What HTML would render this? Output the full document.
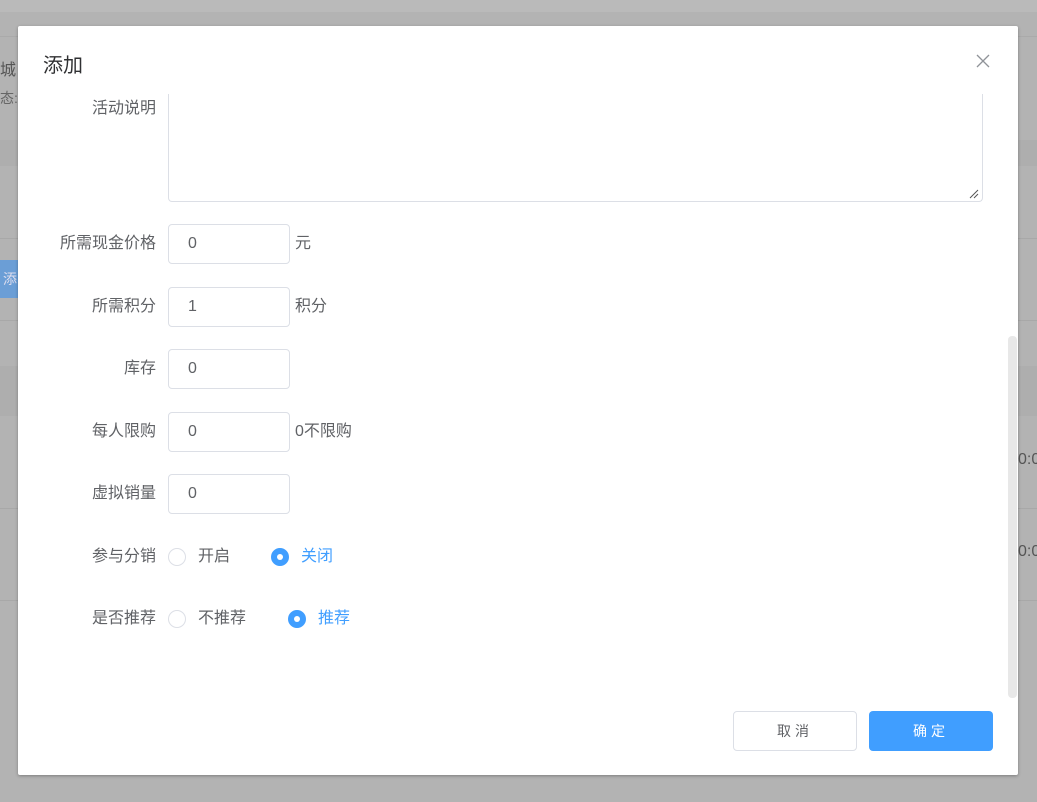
<!DOCTYPE html>
<html><head><meta charset="utf-8"><style>
*{box-sizing:border-box;margin:0;padding:0}
body{width:1037px;height:802px;overflow:hidden;background:#b3b3b3;font-family:"Liberation Sans","Noto Sans CJK SC",sans-serif;position:relative;color:#606266}
.a{position:absolute}
.lab{position:absolute;right:881px;font-size:16px;color:#606266;white-space:nowrap;line-height:20px}
.inp{position:absolute;left:168px;width:122px;height:40px;border:1px solid #dcdfe6;border-radius:4px;font-size:16px;color:#606266;padding-left:19px;line-height:38px}
.suf{position:absolute;left:295px;font-size:16px;line-height:20px;color:#606266}
.rad{position:absolute;width:18px;height:18px;border-radius:50%;border:1px solid #dcdfe6;background:#fff}
.rad.on{background:#409eff;border-color:#409eff}
.rad.on::after{content:"";position:absolute;left:5px;top:5px;width:6px;height:6px;border-radius:50%;background:#fff}
.rt{position:absolute;font-size:16px;line-height:20px}
</style></head><body>
<div class="a" style="left:0;top:0;width:1037px;height:12px;background:#bababa"></div>
<div class="a" style="left:0;top:36px;width:1037px;height:1px;background:#aaa"></div>
<div class="a" style="left:0;top:140px;width:1037px;height:26px;background:#aeaeae"></div>
<div class="a" style="left:0;top:238px;width:1037px;height:1px;background:#a8a8a8"></div>
<div class="a" style="left:0;top:320px;width:1037px;height:1px;background:#a8a8a8"></div>
<div class="a" style="left:0;top:366px;width:1037px;height:50px;background:#aeaeae"></div>
<div class="a" style="left:0;top:508px;width:1037px;height:1px;background:#a8a8a8"></div>
<div class="a" style="left:0;top:600px;width:1037px;height:1px;background:#a8a8a8"></div>
<div class="a" style="left:0;top:56px;font-size:16px;color:#555">城</div>
<div class="a" style="left:0;top:88px;font-size:14px;color:#666">态:</div>
<div class="a" style="left:0;top:260px;width:20px;height:38px;background:#6b9ed6;color:#dde;font-size:14px;line-height:38px;padding-left:3px">添</div>
<div class="a" style="left:1018px;top:451px;font-size:16px;color:#555">0:0</div>
<div class="a" style="left:1018px;top:543px;font-size:16px;color:#555">0:0</div>

<div class="a" style="left:18px;top:26px;width:1000px;height:749px;background:#fff;border-radius:2px;box-shadow:0 1px 3px rgba(0,0,0,.3);overflow:hidden">
</div>
<div class="a" style="left:43px;top:52px;font-size:20px;line-height:28px;color:#303133">添加</div>
<svg class="a" style="left:976px;top:54px" width="14" height="14" viewBox="0 0 14 14"><path d="M1 1L13 13M13 1L1 13" stroke="#909399" stroke-width="1.3"/></svg>
<div class="a" style="left:168px;top:94px;width:815px;height:108px;border:1px solid #dcdfe6;border-top:none;border-radius:0 0 4px 4px"></div>
<svg class="a" style="left:968px;top:188px" width="12" height="12"><path d="M2 10L10 2M6 10L10 6" stroke="#555" stroke-width="1"/></svg>
<div class="lab" style="top:99px">活动说明</div>
<div class="lab" style="top:234px">所需现金价格</div><div class="inp" style="top:224px">0</div><div class="suf" style="top:234px">元</div>
<div class="lab" style="top:297px">所需积分</div><div class="inp" style="top:287px">1</div><div class="suf" style="top:297px">积分</div>
<div class="lab" style="top:359px">库存</div><div class="inp" style="top:349px">0</div>
<div class="lab" style="top:422px">每人限购</div><div class="inp" style="top:412px">0</div><div class="suf" style="top:422px">0不限购</div>
<div class="lab" style="top:484px">虚拟销量</div><div class="inp" style="top:474px">0</div>
<div class="lab" style="top:547px">参与分销</div>
<div class="rad" style="left:168px;top:548px"></div><div class="rt" style="left:198px;top:547px">开启</div>
<div class="rad on" style="left:271px;top:548px"></div><div class="rt" style="left:301px;top:547px;color:#409eff">关闭</div>
<div class="lab" style="top:609px">是否推荐</div>
<div class="rad" style="left:168px;top:610px"></div><div class="rt" style="left:198px;top:609px">不推荐</div>
<div class="rad on" style="left:288px;top:610px"></div><div class="rt" style="left:318px;top:609px;color:#409eff">推荐</div>
<div class="a" style="left:1008px;top:336px;width:9px;height:362px;background:#e8e8e8;border-radius:4px"></div>
<div class="a" style="left:733px;top:711px;width:124px;height:40px;border:1px solid #dcdfe6;border-radius:4px;text-align:center;line-height:38px;font-size:14px;color:#606266;letter-spacing:4px">取消</div>
<div class="a" style="left:869px;top:711px;width:124px;height:40px;background:#409eff;border-radius:4px;text-align:center;line-height:40px;font-size:14px;color:#fff;letter-spacing:4px">确定</div>
</body></html>
